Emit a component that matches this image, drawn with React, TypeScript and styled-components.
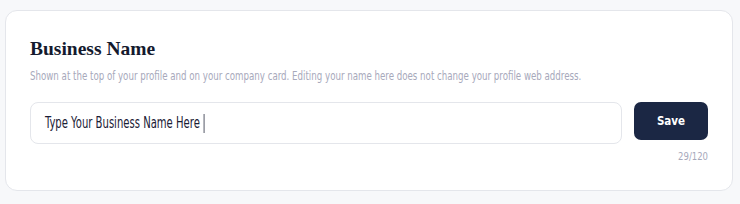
import styled, { createGlobalStyle } from "styled-components";

const GlobalStyle = createGlobalStyle`
  html, body {
    margin: 0;
    padding: 0;
    background: #f7f8fa;
  }
  * {
    box-sizing: border-box;
  }
`;

// no Oswald offline, so the condensed DejaVu is squeezed a bit more
const condensed = `"DejaVu Sans Condensed", "Roboto", sans-serif`;

const Page = styled.div`
  width: 740px;
  height: 204px;
  padding: 10px 7px 13px 5px;
`;

const Card = styled.section`
  background: #ffffff;
  border: 1px solid #e4e6eb;
  border-radius: 12px;
  padding: 27px 24px 24px 24px;
  height: 181px;
`;

const Title = styled.h2`
  margin: 0;
  font-family: "Liberation Serif", "DejaVu Serif", serif;
  font-weight: 700;
  font-size: 19.5px;
  line-height: 22px;
  color: #141a2e;
`;

const Hint = styled.p`
  margin: 7px 0 0 0;
  font-family: ${condensed};
  font-size: 13px;
  line-height: 17px;
  color: #a7a9bb;
  white-space: nowrap;
  transform: scaleX(0.74);
  transform-origin: left center;
`;

const Row = styled.div`
  margin-top: 18px;
  display: flex;
  gap: 12px;
  align-items: flex-start;
`;

const Field = styled.div`
  flex: 1;
  height: 42px;
  border: 1px solid #e4e6eb;
  border-radius: 8px;
  display: flex;
  align-items: center;
  padding: 0 14px;
`;

const FieldText = styled.span`
  display: inline-flex;
  align-items: center;
  font-family: ${condensed};
  font-size: 15px;
  color: #1a2035;
  transform: scaleX(0.745);
  transform-origin: left center;

  &::after {
    content: "";
    display: inline-block;
    width: 1.4px;
    height: 19px;
    margin-left: 5px;
    background: #1a2035;
  }
`;

const SaveButton = styled.button`
  width: 74px;
  height: 38px;
  border: none;
  border-radius: 7px;
  background: #1b2744;
  color: #ffffff;
  font-family: ${condensed};
  font-weight: 700;
  font-size: 11.5px;
`;

const Counter = styled.div`
  margin-top: 6px;
  text-align: right;
  font-family: ${condensed};
  font-size: 11px;
  line-height: 13px;
  color: #a7a9bb;
  transform: scaleX(0.86);
  transform-origin: right center;
`;

export default function App() {
  return (
    <>
      <GlobalStyle />
      <Page>
        <Card>
          <Title>Business Name</Title>
          <Hint>
            Shown at the top of your profile and on your company card. Editing
            your name here does not change your profile web address.
          </Hint>
          <Row>
            <Field>
              <FieldText>Type Your Business Name Here</FieldText>
            </Field>
            <SaveButton>Save</SaveButton>
          </Row>
          <Counter>29/120</Counter>
        </Card>
      </Page>
    </>
  );
}
